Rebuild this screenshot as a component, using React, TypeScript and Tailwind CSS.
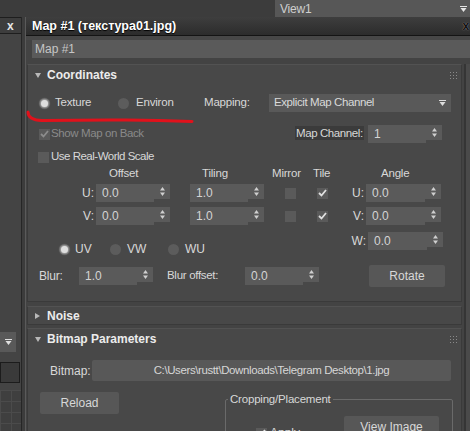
import React from "react";

const FIELD = "bg-[#5a5a5a]";

function Arrows() {
  return (
    <svg width="5" height="9" viewBox="0 0 5 9">
      <path d="M2.5 0 L5 3.5 L0 3.5 Z" fill="#cfcfcf" />
      <path d="M0 5.5 L5 5.5 L2.5 9 Z" fill="#cfcfcf" />
    </svg>
  );
}

function Spinner({ w, value }: { w: string; value: string }) {
  return (
    <div className={`flex h-[18px] shrink-0 ${w}`}>
      <div className={`flex-1 ${FIELD} flex items-center pl-[6px] text-[12px] tracking-normal text-[#d4d4d4]`}>{value}</div>
      <div className={`w-[16px] h-[15px] ${FIELD} flex items-center justify-center`}>
        <Arrows />
      </div>
    </div>
  );
}

function Check({ checked, dim }: { checked?: boolean; dim?: boolean }) {
  return (
    <div className={`w-[11px] h-[11px] shrink-0 ${FIELD} flex items-center justify-center`}>
      {checked ? (
        <svg width="9" height="8" viewBox="0 0 9 8">
          <path d="M1 4 L3.5 6.5 L8 1" stroke={dim ? "#8c8c8c" : "#e0e0e0"} strokeWidth="1.8" fill="none" />
        </svg>
      ) : null}
    </div>
  );
}

function Radio({ on }: { on?: boolean }) {
  return (
    <div className="w-[11px] h-[11px] shrink-0 rounded-full bg-[#5c5c5c] flex items-center justify-center">
      {on ? <div className="w-[7px] h-[7px] rounded-full bg-[#dedede] shadow-[0_0_2px_1px_rgba(230,230,230,0.6)]" /> : null}
    </div>
  );
}

function DownTri({ color = "#dcdcdc" }: { color?: string }) {
  return (
    <svg width="7" height="6" viewBox="0 0 7 6">
      <rect x="0" y="0" width="7" height="1" fill={color} />
      <path d="M0.5 2 L6.5 2 L3.5 6 Z" fill={color} />
    </svg>
  );
}

function Grip() {
  return (
    <svg width="7" height="7" viewBox="0 0 7 7">
      {[0, 3, 6].map((x) =>
        [0, 3, 6].map((y) => <rect key={`${x}-${y}`} x={x} y={y} width="1" height="1" fill="#8a8a8a" />)
      )}
    </svg>
  );
}

function RolloutHeader({ title, open }: { title: string; open: boolean }) {
  return (
    <div className="h-[20px] flex items-center pl-[7px] pr-[4px]">
      <div className="w-[12px] flex items-center">
        {open ? (
          <svg width="6" height="5" viewBox="0 0 6 5">
            <path d="M0 0 L6 0 L3 5 Z" fill="#b8b8b8" />
          </svg>
        ) : (
          <svg width="5" height="6" viewBox="0 0 5 6">
            <path d="M0 0 L5 3 L0 6 Z" fill="#b8b8b8" />
          </svg>
        )}
      </div>
      <span className="font-bold text-[12px] tracking-normal text-[#ececec]">{title}</span>
      <div className="flex-1" />
      {open ? <Grip /> : null}
    </div>
  );
}

export default function App() {
  return (
    <div
      className="w-[470px] h-[431px] overflow-hidden bg-[#434343] flex flex-col text-[11.5px] tracking-[-0.2px] text-[#d8d8d8] relative whitespace-nowrap"
      style={{ fontFamily: '"Liberation Sans", Arial, sans-serif' }}
    >
      {/* top strip */}
      <div className="h-[17px] flex shrink-0 bg-[#3c3c3c]">
        <div className="w-[235px]" />
        <div className="flex-1 flex flex-col">
          <div className="flex-1 flex">
            <div className="w-[40px]" />
            <div className="flex-1 bg-[#575757] flex items-center pl-[5px] pr-[3px] text-[12px] text-[#cfcfcf]">
              <span>View1</span>
              <div className="flex-1" />
              <DownTri color="#e4e4e4" />
            </div>
          </div>
          <div className="h-[1px] bg-[#8c8c8c]" />
        </div>
      </div>

      <div className="flex-1 flex min-h-0">
        {/* left panel */}
        <div className="w-[22px] shrink-0 flex flex-col bg-[#444] border-r border-[#262626]">
          <div className="h-[17px] bg-[#3d3d3d] border-y border-[#1e1e1e] flex items-center pl-[7px] font-bold text-[12px] text-[#e6e6e6]">
            x
          </div>
          <div className="h-[298px]" />
          <div className="h-[20px] w-[16px] bg-[#595959] flex items-center justify-center">
            <DownTri color="#e0e0e0" />
          </div>
          <div className="h-[10px]" />
          <div className="h-[21px] w-[20px] bg-[#3a3a3a] border border-[#1c1c1c]" />
          <div className="h-[7px]" />
          <div className="flex-1 bg-[#3f3f3f] bg-[linear-gradient(#4b4b4b_1px,transparent_1px),linear-gradient(90deg,#4b4b4b_1px,transparent_1px)] bg-[size:11px_11px]" />
        </div>
        <div className="w-[3px] shrink-0 bg-[#3c3c3c]" />

        {/* main window */}
        <div className="flex-1 flex flex-col border-l border-[#5a5a5a] min-w-0">
          <div className="h-[19px] shrink-0 bg-[linear-gradient(#3e3e3e,#2c2c2c)] border-b border-[#141414] flex items-center pl-[6px] pr-[1px]">
            <span className="font-bold text-[12.5px] tracking-normal text-white [text-shadow:0_1px_1px_#000]">
              Map #1 (текстура01.jpg)
            </span>
            <div className="flex-1" />
            <span className="font-bold text-[12px] text-[#111] [text-shadow:0_0_1px_#aaa]">x</span>
          </div>
          <div className="h-[4px] bg-[#474747]" />
          <div className="h-[18px] ml-[6px] bg-[#5a5a5a] flex items-center pl-[3px] text-[12px] tracking-normal text-[#c6c6c6]">
            Map #1
          </div>
          <div className="h-[6px]" />

          <div className="flex flex-1 min-h-0">
            {/* rollouts */}
            <div className="ml-[1px] w-[435px] shrink-0 flex flex-col">
              {/* Coordinates */}
              <div className="h-[238px] shrink-0 bg-[#484848] border border-[#3a3a3a] border-t-[#525252] flex flex-col">
                <RolloutHeader title="Coordinates" open />
                {/* row 1 */}
                <div className="mt-[9px] h-[18px] flex items-center pl-[11px]">
                  <div className="w-[79px] flex items-center">
                    <Radio on />
                    <span className="ml-[5px]">Texture</span>
                  </div>
                  <div className="w-[86px] flex items-center">
                    <Radio />
                    <span className="ml-[7px]">Environ</span>
                  </div>
                  <div className="w-[65px]">Mapping:</div>
                  <div className="w-[182px] h-[18px] bg-[#595959] flex items-center pl-[5px] pr-[5px] tracking-[-0.4px] text-[#dadada]">
                    <span>Explicit Map Channel</span>
                    <div className="flex-1" />
                    <DownTri />
                  </div>
                </div>
                {/* row 2 */}
                <div className="mt-[13px] h-[18px] flex items-center pl-[11px]">
                  <div className="w-[256px] flex items-center">
                    <Check checked dim />
                    <span className="ml-[1px] tracking-[-0.4px] text-[#8a8a8a]">Show Map on Back</span>
                  </div>
                  <div className="w-[73px]">
                    <span className="bg-[#3b3b3b] px-[1px] py-[1px] tracking-[-0.4px]">Map Channel:</span>
                  </div>
                  <Spinner w="w-[74px]" value="1" />
                </div>
                {/* row 3 */}
                <div className="mt-[6px] h-[16px] flex items-center pl-[10px]">
                  <Check />
                  <span className="ml-[2px] tracking-[-0.5px]">Use Real-World Scale</span>
                </div>
                {/* row 4 headers */}
                <div className="mt-[2px] h-[14px] flex items-center">
                  <div className="w-[81px]" />
                  <div className="w-[93px]">Offset</div>
                  <div className="w-[70px]">Tiling</div>
                  <div className="w-[41px]">Mirror</div>
                  <div className="w-[68px]">Tile</div>
                  <div>Angle</div>
                </div>
                {/* U row */}
                <div className="mt-[3px] h-[18px] flex items-center text-[12px] tracking-normal">
                  <div className="w-[68px] text-right pr-[2px]">U:</div>
                  <Spinner w="w-[74px]" value="0.0" />
                  <div className="w-[20px]" />
                  <Spinner w="w-[74px]" value="1.0" />
                  <div className="w-[21px]" />
                  <Check />
                  <div className="w-[21px]" />
                  <Check checked />
                  <div className="w-[38px] text-right pr-[2px]">U:</div>
                  <Spinner w="w-[75px]" value="0.0" />
                </div>
                {/* V row */}
                <div className="mt-[5px] h-[18px] flex items-center text-[12px] tracking-normal">
                  <div className="w-[68px] text-right pr-[2px]">V:</div>
                  <Spinner w="w-[74px]" value="0.0" />
                  <div className="w-[20px]" />
                  <Spinner w="w-[74px]" value="1.0" />
                  <div className="w-[21px]" />
                  <Check />
                  <div className="w-[21px]" />
                  <Check checked />
                  <div className="w-[38px] text-right pr-[2px]">V:</div>
                  <Spinner w="w-[75px]" value="0.0" />
                </div>
                {/* W + radios */}
                <div className="mt-[7px] h-[24px] flex items-start text-[12px] tracking-normal">
                  <div className="w-[320px] mt-[10px] h-[14px] flex items-center pl-[31px]">
                    <div className="w-[51px] flex items-center">
                      <Radio on />
                      <span className="ml-[5px]">UV</span>
                    </div>
                    <div className="w-[58px] flex items-center">
                      <Radio />
                      <span className="ml-[6px]">VW</span>
                    </div>
                    <div className="flex items-center">
                      <Radio />
                      <span className="ml-[6px]">WU</span>
                    </div>
                  </div>
                  <div className="w-[20px] h-[18px] flex items-center justify-end pr-[2px]">W:</div>
                  <Spinner w="w-[75px]" value="0.0" />
                </div>
                {/* blur row */}
                <div className="mt-[9px] h-[22px] flex items-center pl-[11px]">
                  <div className="w-[40px] text-[12px]">Blur:</div>
                  <Spinner w="w-[74px]" value="1.0" />
                  <div className="w-[14px]" />
                  <div className="w-[78px] tracking-[-0.3px]">Blur offset:</div>
                  <Spinner w="w-[74px]" value="0.0" />
                  <div className="w-[50px]" />
                  <div className="w-[76px] h-[22px] bg-[#575757] rounded-[2px] flex items-center justify-center text-[12px] tracking-normal">
                    Rotate
                  </div>
                </div>
              </div>

              {/* Noise */}
              <div className="mt-[4px] h-[19px] shrink-0 bg-[#484848] border border-[#3a3a3a] border-t-[#525252] flex flex-col justify-center">
                <div className="h-[17px] flex items-center pl-[7px]">
                  <div className="w-[12px] flex items-center">
                    <svg width="5" height="6" viewBox="0 0 5 6">
                      <path d="M0 0 L5 3 L0 6 Z" fill="#b8b8b8" />
                    </svg>
                  </div>
                  <span className="font-bold text-[12px] tracking-normal text-[#ececec]">Noise</span>
                </div>
              </div>

              {/* Bitmap Parameters */}
              <div className="mt-[3px] flex-1 bg-[#484848] border border-[#3a3a3a] border-t-[#525252] flex flex-col">
                <RolloutHeader title="Bitmap Parameters" open />
                <div className="mt-[11px] h-[21px] flex items-center pl-[22px]">
                  <div className="w-[42px] text-[12px] tracking-normal">Bitmap:</div>
                  <div className="w-[359px] h-[21px] bg-[#585858] rounded-[2px] flex items-center justify-center tracking-[-0.4px] text-[#d6d6d6]">
                    C:\Users\rustt\Downloads\Telegram Desktop\1.jpg
                  </div>
                </div>
                <div className="mt-[11px] flex items-start text-[12px] tracking-normal pl-[12px]">
                  <div className="w-[79px] h-[22px] bg-[#575757] rounded-[2px] flex items-center justify-center shrink-0">
                    Reload
                  </div>
                  <div className="w-[106px]" />
                  <fieldset className="w-[228px] h-[60px] border border-[#6a6a6a] rounded-[2px] mt-[-1px]">
                    <legend className="ml-[2px] px-[2px] text-[11.5px] tracking-[-0.2px]">Cropping/Placement</legend>
                    <div className="flex items-start mt-[8px] pl-[30px]">
                      <div className="mt-[8px] flex items-center">
                        <Check checked />
                        <span className="ml-[3px]">Apply</span>
                      </div>
                      <div className="w-[44px]" />
                      <div className="w-[95px] h-[22px] bg-[#575757] rounded-[2px] flex items-center justify-center">
                        View Image
                      </div>
                    </div>
                  </fieldset>
                </div>
              </div>
            </div>
            {/* scrollbar area */}
            <div className="w-[2px] shrink-0" />
            <div className="w-[2px] shrink-0 bg-[#353535]" />
            <div className="flex-1 bg-[#4a4a4a]" />
          </div>
        </div>
      </div>

      {/* hand-drawn red annotation */}
      <svg className="absolute left-0 top-0 pointer-events-none" width="470" height="431" viewBox="0 0 470 431">
        <path
          d="M28 112 Q28 120 42 120.5 L110 120 Q150 119.5 192 121.5"
          stroke="#e1111b"
          strokeWidth="3"
          fill="none"
          strokeLinecap="round"
        />
      </svg>
    </div>
  );
}
